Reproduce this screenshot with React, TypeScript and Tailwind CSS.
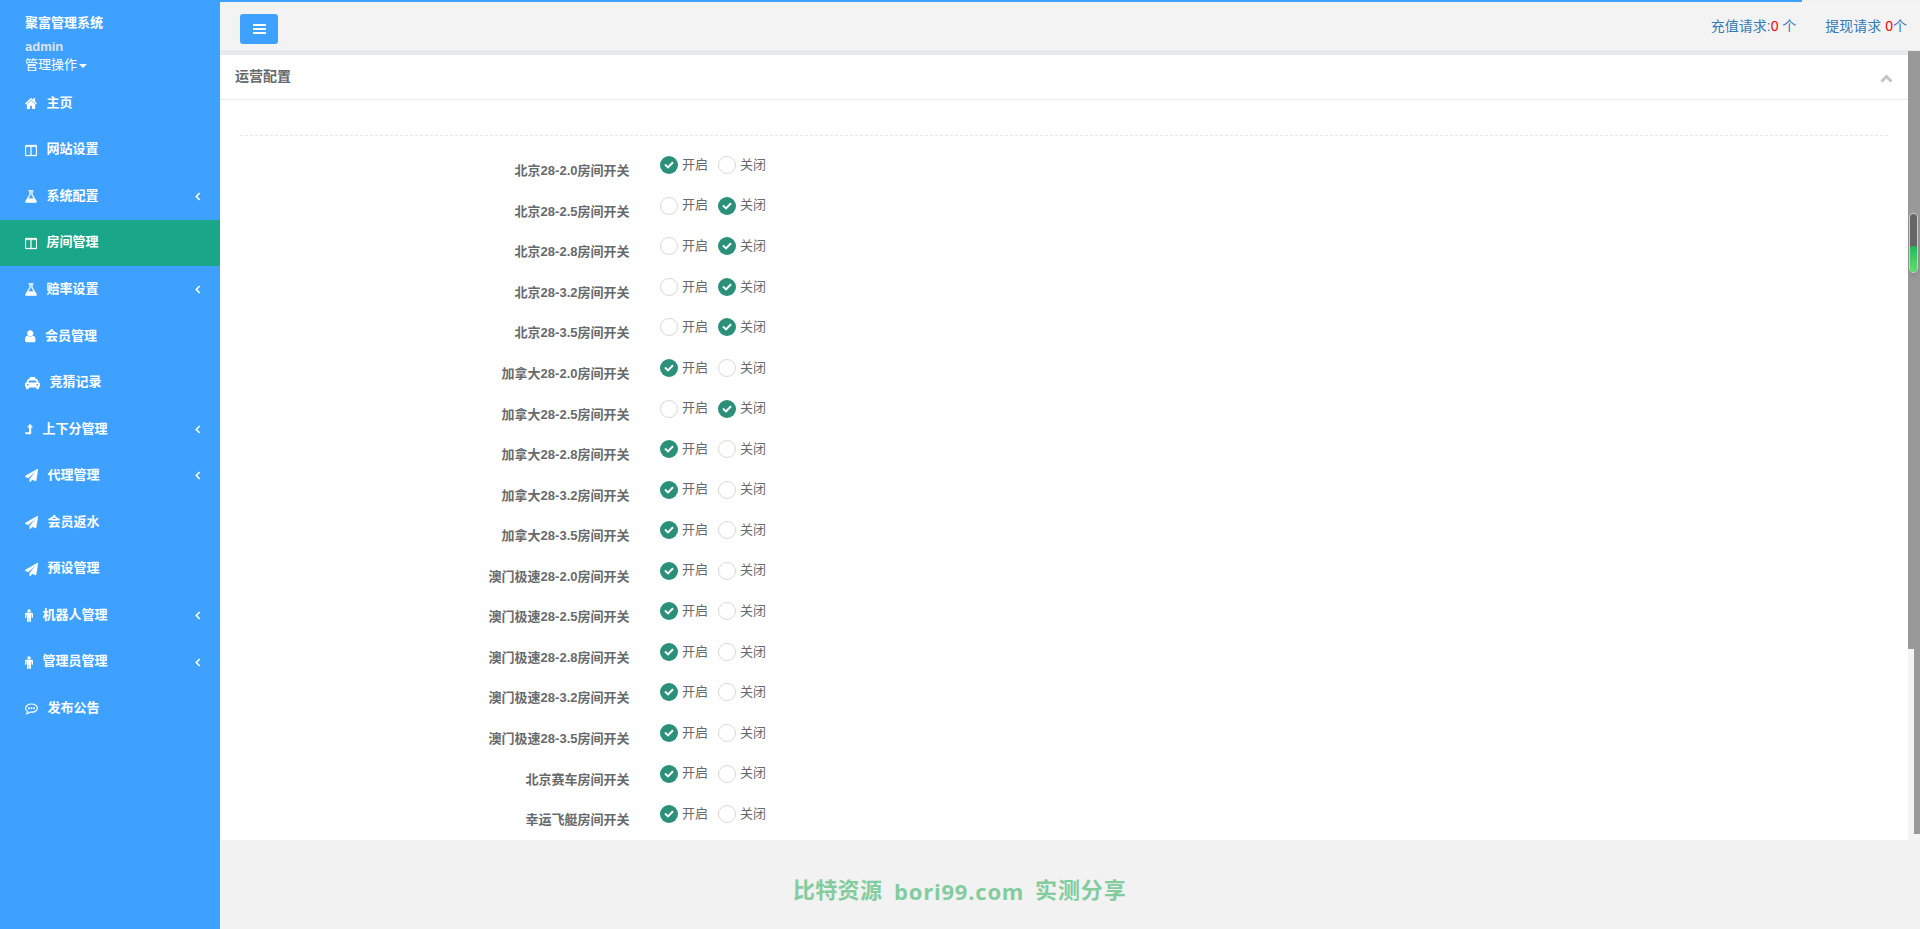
import type { ReactNode } from 'react'
import { FaTaxi } from 'react-icons/fa'

const PATHS = {
  home: 'M1472 992v480q0 26-19 45t-45 19h-384v-384h-256v384h-384q-26 0-45-19t-19-45v-480q0-1 .5-3t.5-3l575-474 575 474q1 2 1 6zm223-69l-62 74q-8 9-21 11h-3q-13 0-21-7l-692-577-692 577q-12 8-24 7-13-2-21-11l-62-74q-8-10-7-23.5t11-21.5l719-599q32-26 76-26t76 26l244 204v-195q0-14 9-23t23-9h192q14 0 23 9t9 23v408l219 182q10 8 11 21.5t-7 23.5z',
  columns: 'M224 1536h608v-1152h-640v1120q0 13 9.5 22.5t22.5 9.5zm1376-32v-1120h-640v1152h608q13 0 22.5-9.5t9.5-22.5zm128-1216v1216q0 66-47 113t-113 47h-1344q-66 0-113-47t-47-113v-1216q0-66 47-113t113-47h1344q66 0 113 47t47 113z',
  flask: 'M1591 1448q56 89 21.5 152.5t-140.5 63.5h-1152q-106 0-140.5-63.5t21.5-152.5l503-793v-399h-64q-26 0-45-19t-19-45 19-45 45-19h512q26 0 45 19t19 45-19 45-45 19h-64v399zm-779-725l-272 429h712l-272-429-20-31v-436h-128v436z',
  user: 'M1536 1399q0 109-62.5 187t-150.5 78h-854q-88 0-150.5-78t-62.5-187q0-85 8.5-160.5t31.5-152 58.5-131 94-89 134.5-34.5q131 128 313 128t313-128q76 0 134.5 34.5t94 89 58.5 131 31.5 152 8.5 160.5zm-256-887q0 159-112.5 271.5t-271.5 112.5-271.5-112.5-112.5-271.5 112.5-271.5 271.5-112.5 271.5 112.5 112.5 271.5z',
  plane: 'M1764 11q33 24 27 64l-256 1536q-5 29-32 45-14 8-31 8-11 0-24-5l-453-185-242 295q-18 23-49 23-13 0-22-4-19-7-30.5-23.5t-11.5-36.5v-349l864-1059-1069 925-395-162q-37-14-40-55-2-40 32-59l1664-960q15-9 32-9 20 0 36 11z',
  male: 'M1408 704v416q0 40-28 68t-68 28-68-28-28-68v-352h-64v912q0 46-33 79t-79 33-79-33-33-79v-464h-64v464q0 46-33 79t-79 33-79-33-33-79v-912h-64v352q0 40-28 68t-68 28-68-28-28-68v-416q0-80 56-136t136-56h640q80 0 136 56t56 136zm-288-448q0 93-65.5 158.5t-158.5 65.5-158.5-65.5-65.5-158.5 65.5-158.5 158.5-65.5 158.5 65.5 65.5 158.5z',
}

const icons: Record<string, ReactNode> = {
  home: <svg className="w-3 h-[13px]" viewBox="64 128 1664 1536" preserveAspectRatio="none" fill="currentColor"><path d={PATHS.home} /></svg>,
  columns: (
    <svg className="w-3 h-[13px]" viewBox="64 0 1664 1792" fill="currentColor" stroke="currentColor" strokeWidth="40">
      <path d={PATHS.columns} />
    </svg>
  ),
  flask: (
    <svg className="w-3 h-[13px]" viewBox="128 100 1536 1600" preserveAspectRatio="none" fill="currentColor" stroke="currentColor" strokeWidth="40">
      <path d={PATHS.flask} />
    </svg>
  ),
  user: <svg className="w-[10.5px] h-[13px]" viewBox="256 90 1280 1660" preserveAspectRatio="none" fill="currentColor"><path d={PATHS.user} /></svg>,
  taxi: <FaTaxi className="w-[15px] h-[14px]" preserveAspectRatio="none" />,
  levelUp: (
    <svg className="w-[8px] h-[13px]" viewBox="0 0 8 13" fill="currentColor">
      <path d="M5 0.8L8 4.6H6.2V10.4Q6.2 11.2 5.4 11.2H.8L0 9.3H4V4.6H2.1Z" />
    </svg>
  ),
  plane: <svg className="w-[13px] h-[13px]" viewBox="0 0 1792 1792" fill="currentColor" stroke="currentColor" strokeWidth="40"><path d={PATHS.plane} /></svg>,
  male: <svg className="w-[8px] h-[13px]" viewBox="384 0 1024 1792" preserveAspectRatio="none" fill="currentColor"><path d={PATHS.male} /></svg>,
  comment: (
    <svg className="w-[13px] h-[13px]" viewBox="0 0 13 13" fill="none" stroke="currentColor" strokeWidth="1.2">
      <path d="M6.5 2C3.3 2 .6 3.8.6 6.2c0 1.4.8 2.5 2 3.2 0 1-.4 1.7-.9 2.3 1.4-.2 2.4-.8 3.2-1.6 4.2.6 7.5-1.2 7.5-3.9C12.4 3.8 9.7 2 6.5 2Z" />
      <g fill="currentColor" stroke="none">
        <circle cx="3.9" cy="6.2" r="1" />
        <circle cx="6.5" cy="6.2" r="1" />
        <circle cx="9.1" cy="6.2" r="1" />
      </g>
    </svg>
  ),
}

const menu = [
  { icon: 'home', label: '主页' },
  { icon: 'columns', label: '网站设置' },
  { icon: 'flask', label: '系统配置', arrow: true },
  { icon: 'columns', label: '房间管理', active: true },
  { icon: 'flask', label: '赔率设置', arrow: true },
  { icon: 'user', label: '会员管理' },
  { icon: 'taxi', label: '竞猜记录' },
  { icon: 'levelUp', label: '上下分管理', arrow: true },
  { icon: 'plane', label: '代理管理', arrow: true },
  { icon: 'plane', label: '会员返水' },
  { icon: 'plane', label: '预设管理' },
  { icon: 'male', label: '机器人管理', arrow: true },
  { icon: 'male', label: '管理员管理', arrow: true },
  { icon: 'comment', label: '发布公告' },
]

const rooms = [
  { name: '北京28-2.0', on: true },
  { name: '北京28-2.5', on: false },
  { name: '北京28-2.8', on: false },
  { name: '北京28-3.2', on: false },
  { name: '北京28-3.5', on: false },
  { name: '加拿大28-2.0', on: true },
  { name: '加拿大28-2.5', on: false },
  { name: '加拿大28-2.8', on: true },
  { name: '加拿大28-3.2', on: true },
  { name: '加拿大28-3.5', on: true },
  { name: '澳门极速28-2.0', on: true },
  { name: '澳门极速28-2.5', on: true },
  { name: '澳门极速28-2.8', on: true },
  { name: '澳门极速28-3.2', on: true },
  { name: '澳门极速28-3.5', on: true },
  { name: '北京赛车', on: true },
  { name: '幸运飞艇', on: true },
]

function Radio({ checked, label }: { checked: boolean; label: string }) {
  return (
    <label className="flex items-center w-[58px] h-[18px]">
      {checked ? (
        <span className="w-[18px] h-[18px] rounded-full bg-[#2b907a] flex items-center justify-center shrink-0">
          <svg className="w-[10px] h-[8px]" viewBox="0 0 10 8" fill="none" stroke="#fff" strokeWidth="2">
            <path d="M1 3.6L4 6.4L9 1.2" />
          </svg>
        </span>
      ) : (
        <span className="w-[18px] h-[18px] rounded-full border border-[#d9d9d5] bg-white shrink-0" />
      )}
      <span className="ml-[4px]">{label}</span>
    </label>
  )
}

function Sidebar() {
  return (
    <nav className="w-[220px] shrink-0 bg-[#3ea1ff] text-white">
      <div className="h-[80.2px] pl-[25px] pt-[13px]">
        <p className="font-bold leading-[20px]">聚富管理系统</p>
        <p className="font-bold leading-[18px] mt-[5px] text-[#dfe4ed]">admin</p>
        <p className="leading-[18px] flex items-center">
          管理操作
          <span className="ml-[2px] mt-[2px] border-x-4 border-t-4 border-x-transparent border-t-white" />
        </p>
      </div>
      {menu.map((item, i) => (
        <a
          key={i}
          className={`flex items-center h-[46.57px] pl-[25px] pr-[19px] font-bold ${item.active ? 'bg-[#19a689]' : ''}`}
        >
          {icons[item.icon]}
          <span className="ml-[9.4px] pb-[1px]">{item.label}</span>
          {item.arrow && (
            <svg className="w-[6px] h-[9px] ml-auto" viewBox="0 0 6 9" fill="none" stroke="currentColor" strokeWidth="1.6">
              <path d="M4.7 1L1.3 4.5L4.7 8" />
            </svg>
          )}
        </a>
      ))}
    </nav>
  )
}

export default function App() {
  return (
    <div className="relative flex w-[1920px] h-[929px] overflow-hidden bg-[#f2f2f2] text-[13px] leading-[18.57px] text-[#676a6c] font-['Liberation_Sans','Noto_Sans_CJK_SC',sans-serif]">
      <Sidebar />
      <main className="flex-1 flex flex-col min-w-0">
        <div className="h-[2px] w-[1582px] bg-[#3ea1ff]" />
        <header className="h-12 flex items-start justify-between pl-5 pr-[13px] bg-[#f3f3f4]">
          <button className="mt-3 w-[38px] h-[30px] rounded-[3px] bg-[#3ea1ff] flex flex-col items-center justify-center gap-[2px]">
            <span className="w-[13px] h-[2px] bg-white" />
            <span className="w-[13px] h-[2px] bg-white" />
            <span className="w-[13px] h-[2px] bg-white" />
          </button>
          <div className="flex gap-[29px] mt-[14px] text-sm leading-5 text-[#337ab7]">
            <a>充值请求:<span className="text-[#f00]">0</span> 个</a>
            <a>提现请求 <span className="text-[#f00]">0</span>个</a>
          </div>
        </header>
        <div className="h-[5px] bg-[#e7eaec]" />

        <section className="h-[785px] w-[1688px] bg-white overflow-hidden">
          <div className="h-[45px] flex items-center justify-between pl-[15px] pr-[15px] border-b border-[#e7eaec]">
            <h5 className="text-sm font-semibold pb-[3px]">运营配置</h5>
            <svg className="w-[13px] h-[9px] mt-[3px]" viewBox="0 0 13 9" fill="none" stroke="#c4c4c4" strokeWidth="3">
              <path d="M1.5 7.5L6.5 2.5L11.5 7.5" />
            </svg>
          </div>
          <div className="mx-5 mt-[35px] mb-[12.15px] border-t border-dashed border-[#e7eaec]" />
          {rooms.map(room => (
            <div key={room.name} className="flex h-[40.57px] pt-2">
              <p className="w-[409.5px] text-right font-bold pt-[6px]">{room.name}房间开关</p>
              <div className="flex ml-[30.5px]">
                <Radio checked={room.on} label="开启" />
                <Radio checked={!room.on} label="关闭" />
              </div>
            </div>
          ))}
        </section>

        <footer className="flex items-center pl-[573px] pt-[14px] h-[89px] text-[22px] font-bold text-[#82cc9e]">
          <span className="w-[101px] tracking-[0.3px]">比特资源</span>
          <span className="w-[141px] tracking-[0.8px] font-['Open_Sans']">bori99.com</span>
          <span className="tracking-[0.9px]">实测分享</span>
        </footer>
      </main>

      {/* scrollbars of the frame and of the page */}
      <div className="absolute left-[1908px] top-[51px] w-3 h-[789px] bg-[#f4f4f4]">
        <div className="h-[598px] bg-[#999]" />
        <div className="ml-[6px] h-[185px] bg-[#999]" />
      </div>
      <div className="absolute left-[1909px] top-[213px] w-[9px] h-[60px] rounded-[4px] border border-[#ccc] bg-[#666] overflow-hidden flex flex-col justify-end shadow-md">
        <div className="h-[26px] rounded-t-[2px] bg-linear-to-b from-[#1fb85c] to-[#5fe070]" />
      </div>
    </div>
  )
}
